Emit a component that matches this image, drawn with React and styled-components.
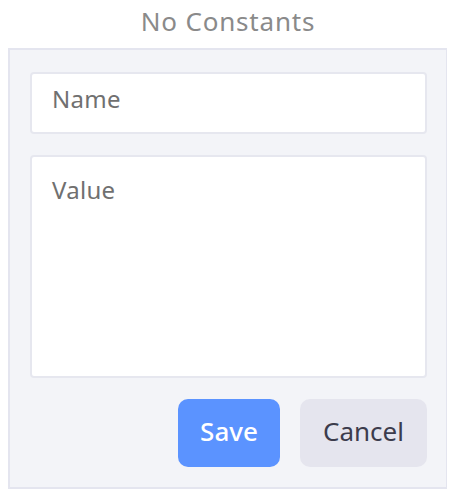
import React from "react";
import styled, { createGlobalStyle } from "styled-components";

const Global = createGlobalStyle`
  body {
    margin: 8px;
    background: #ffffff;
    font-family: "Noto Sans", "Open Sans", sans-serif;
  }
  * { box-sizing: border-box; }
`;

const Wrapper = styled.div`
  width: 440px;
  display: flex;
  flex-direction: column;
`;

const Title = styled.div`
  height: 40px;
  display: flex;
  align-items: flex-start;
  justify-content: center;
  font-size: 26px;
  line-height: 26px;
  letter-spacing: 0.8px;
  color: #8a8a8a;
`;

const Panel = styled.div`
  background: #f3f4f8;
  border: 2px solid #e4e5ef;
  padding: 22px 19px 20px 20px;
  display: flex;
  flex-direction: column;
  gap: 21px;
`;

const Field = styled.div`
  height: ${(p) => p.$h}px;
  background: #ffffff;
  border: 2px solid #e6e7ef;
  border-radius: 4px;
  padding: ${(p) => p.$pt}px 20px 0 20px;
  font-size: 24px;
  line-height: 26px;
  letter-spacing: 0.3px;
  color: #707070;
`;

const Actions = styled.div`
  display: flex;
  justify-content: flex-end;
  gap: 20px;
`;

const Button = styled.button`
  height: 68px;
  width: ${(p) => p.$w}px;
  border: none;
  border-radius: 10px;
  padding: 0 0 5px 0;
  font-family: inherit;
  font-size: 26px;
  font-weight: ${(p) => (p.$primary ? 500 : 400)};
  background: ${(p) => (p.$primary ? "#5b93ff" : "#e5e5ee")};
  color: ${(p) => (p.$primary ? "#ffffff" : "#3c3c4c")};
  cursor: pointer;
`;

export default function App() {
  return (
    <>
      <Global />
      <Wrapper>
        <Title>No Constants</Title>
        <Panel>
          <Field $h={62} $pt={12}>Name</Field>
          <Field $h={223} $pt={20}>Value</Field>
          <Actions>
            <Button $primary $w={102}>Save</Button>
            <Button $w={127}>Cancel</Button>
          </Actions>
        </Panel>
      </Wrapper>
    </>
  );
}
